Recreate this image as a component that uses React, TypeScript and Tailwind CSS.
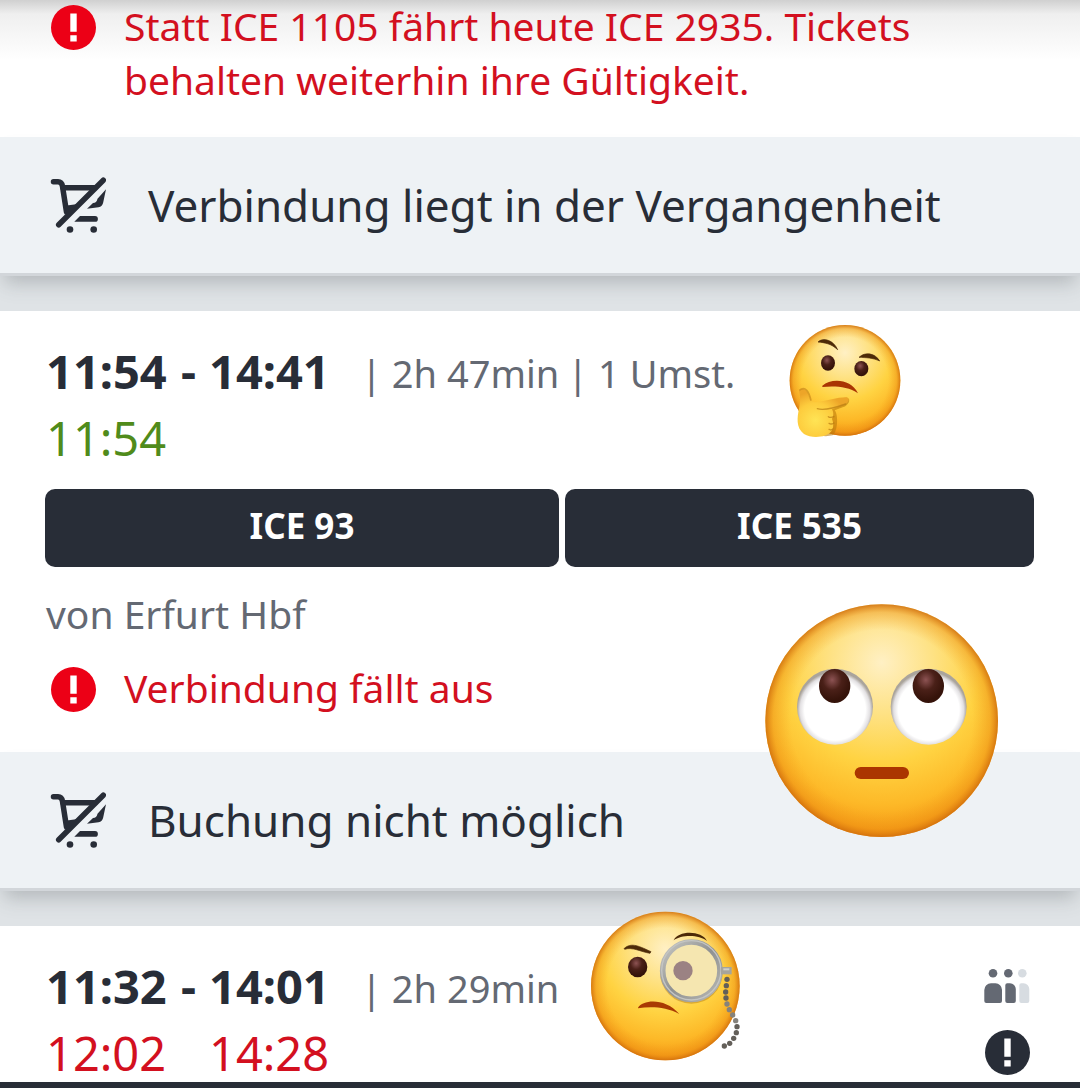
import type { ReactNode } from "react";

interface Connection {
  departure: string;
  arrival: string;
  liveDeparture: string;
  liveArrival?: string;
  liveClass: string;
  details: string[];
}

const cancelled: Connection = {
  departure: "11:54",
  arrival: "14:41",
  liveDeparture: "11:54",
  liveClass: "text-[#508b1b]",
  details: ["2h 47min", "1 Umst."],
};

const delayed: Connection = {
  departure: "11:32",
  arrival: "14:01",
  liveDeparture: "12:02",
  liveArrival: "14:28",
  liveClass: "text-[#d3101f]",
  details: ["2h 29min"],
};

function AlertIcon({ className }: { className: string }) {
  return (
    <svg viewBox="0 0 45 45" className={`size-[45px] shrink-0 ${className}`} aria-hidden="true">
      <circle cx="22.5" cy="22.5" r="22.5" fill="currentColor" />
      <path d="M19.300 8.500h6.400v18.200h-6.400zM19.300 30.300h6.400v6.200h-6.400z" fill="#fff" />
    </svg>
  );
}

function NoCartIcon() {
  return (
    <svg viewBox="0 0 56 56" className="size-14 shrink-0" aria-hidden="true">
      <g fill="none" stroke="currentColor" strokeWidth="5.5" strokeLinecap="round" strokeLinejoin="round">
        <path d="M3.500 4.800H8c3 0 4 1.700 4.500 4.500L16.500 35" />
        <path d="M13 10.800H45" />
        <path d="M53.300 3.200 8.700 47.800" />
      </g>
      <g fill="currentColor">
        <path d="M15 28.700 28 27 17 38z" />
        <path d="M56 12.300 53.200 25.500c-.6 2.800-2 4.300-4.700 4.700L37 31.800l6-5.800c2.500-.2 3.800-1.200 4.500-4.200z" />
        <path d="M24.300 44.800 30 39H45a2.900 2.900 0 0 1 0 5.800z" />
        <circle cx="20" cy="52.500" r="3.300" />
        <circle cx="43.700" cy="52.500" r="3.300" />
      </g>
    </svg>
  );
}

function OccupancyIcon() {
  return (
    <svg viewBox="0 0 46 36" className="h-9 w-[46px]" role="img" aria-label="Auslastung">
      <g fill="#646973">
        <circle cx="9" cy="5.300" r="4.300" />
        <path d="M7 15.300h4.500a6.500 6.500 0 0 1 6.500 6.500V33a2 2 0 0 1-2 2H2.300a2 2 0 0 1-2-2V22a6.700 6.700 0 0 1 6.700-6.700z" />
        <circle cx="24.300" cy="5.300" r="4.300" />
        <path d="M23.300 15.300H26a5.800 5.800 0 0 1 5.800 5.800V33a2 2 0 0 1-2 2h-6.500a2 2 0 0 1-2-2V17.300a2 2 0 0 1 2-2z" />
      </g>
      <g fill="#d7dce1">
        <circle cx="38.300" cy="5.300" r="4.300" />
        <path d="M37.300 15.300h2.200a5.800 5.800 0 0 1 5.800 5.800V33a2 2 0 0 1-2 2h-6a2 2 0 0 1-2-2V17.300a2 2 0 0 1 2-2z" />
      </g>
    </svg>
  );
}

// Gradients shared by all emoji faces
function EmojiDefs() {
  return (
    <svg className="absolute size-0" aria-hidden="true">
      <defs>
        <radialGradient id="skin" cx="0.5" cy="0.25" r="0.78">
          <stop offset="0" stopColor="#fff0c4" />
          <stop offset="0.28" stopColor="#fee285" />
          <stop offset="0.55" stopColor="#ffd342" />
          <stop offset="0.78" stopColor="#fdb928" />
          <stop offset="1" stopColor="#f4910f" />
        </radialGradient>
        <radialGradient id="rim">
          <stop offset="0.78" stopColor="#f09a1a" stopOpacity="0" />
          <stop offset="0.93" stopColor="#e98a12" stopOpacity="0.4" />
          <stop offset="1" stopColor="#cf6c0c" stopOpacity="0.85" />
        </radialGradient>
        <radialGradient id="pupil" cx="0.42" cy="0.32" r="0.6">
          <stop offset="0" stopColor="#8d5353" />
          <stop offset="0.5" stopColor="#4a2018" />
          <stop offset="1" stopColor="#35130a" />
        </radialGradient>
        <radialGradient id="eyeball" cy="0.54">
          <stop offset="0.8" stopColor="#fff" />
          <stop offset="0.92" stopColor="#e2e0e2" />
          <stop offset="1" stopColor="#aaa49c" />
        </radialGradient>
        <radialGradient id="hand" cx="0.35" cy="0.65" r="0.6">
          <stop offset="0" stopColor="#ffe455" />
          <stop offset="0.6" stopColor="#fdcc3d" />
          <stop offset="1" stopColor="#eda528" />
        </radialGradient>
        <linearGradient id="metal" x1="0" y1="0" x2="1" y2="1">
          <stop offset="0" stopColor="#c9c9c4" />
          <stop offset="0.5" stopColor="#8f9192" />
          <stop offset="1" stopColor="#b9b9b4" />
        </linearGradient>
      </defs>
    </svg>
  );
}

function Face({ cx, cy, r }: { cx: number; cy: number; r: number }) {
  return (
    <>
      <circle cx={cx} cy={cy} r={r} fill="url(#skin)" />
      <circle cx={cx} cy={cy} r={r} fill="url(#rim)" />
    </>
  );
}

function ThinkingEmoji() {
  return (
    <svg viewBox="0 0 390 390" className="absolute top-1 left-[780px] size-[130px]" role="img" aria-label="Nachdenkliches Gesicht">
      <Face cx={195} cy={196} r={166} />
      <path d="M114 81C130 66 160 75 173 104C154 86 134 83 114 81z" fill="#4d2a08" stroke="#4d2a08" strokeWidth="2" />
      <path d="M237 127C256 109 286 115 299 138C278 128 258 128 237 127z" fill="#4d2a08" stroke="#4d2a08" strokeWidth="2" />
      <ellipse cx="144" cy="144" rx="21" ry="23" fill="url(#pupil)" />
      <ellipse cx="244" cy="161" rx="21" ry="23" fill="url(#pupil)" />
      <path d="M127 212C155 188 214 192 234 235C204 213 160 213 127 216z" fill="#a93503" />
      <path d="M92 262C120 272 175 246 203 248C214 254 204 272 190 276L164 286C176 300 173 352 158 361C130 368 100 360 82 340z" fill="#bd7c0c" opacity="0.6" />
      <path
        d="M57 227C66 217 80 222 87 243C92 257 98 262 112 261C140 258 175 246 200 247C212 252 204 265 190 270L156 283C163 296 159 306 156 312C162 326 160 342 154 349C140 368 95 372 72 357C46 338 53 304 56 286C62 263 61 244 57 227z"
        fill="url(#hand)"
      />
      <path d="M112 281C132 288 166 278 197 267M145 305C149 308 155 308 162 305M147 325C151 328 156 328 162 324M147 343C151 346 154 346 159 342" fill="none" stroke="#b77b12" strokeWidth="4" strokeLinecap="round" opacity="0.7" />
      <path d="M58 226C76 212 87 230 93 257" fill="none" stroke="#c98a1b" strokeWidth="5" opacity="0.7" />
    </svg>
  );
}

function RollingEyesEmoji() {
  return (
    <svg viewBox="0 0 765 765" className="absolute top-[284px] left-[755px] size-[255px]" role="img" aria-label="Augenrollendes Gesicht">
      <Face cx={380} cy={377} r={349} />
      <circle cx="240" cy="335" r="114" fill="url(#eyeball)" />
      <circle cx="521" cy="335" r="114" fill="url(#eyeball)" />
      <ellipse cx="239" cy="273" rx="47" ry="51" fill="url(#pupil)" />
      <ellipse cx="520" cy="273" rx="47" ry="51" fill="url(#pupil)" />
      <rect x="299" y="516" width="163" height="36" rx="18" fill="#ab3500" />
    </svg>
  );
}

const chain = [
  [441, 238], [439, 257], [437, 276], [438, 294], [441, 312], [448, 329], [458, 345],
  [467, 362], [471, 380], [469, 398], [461, 415], [449, 430], [433, 438],
];

function MonocleEmoji() {
  return (
    <svg viewBox="0 0 510 510" className="absolute -top-[26px] left-[580px] size-[170px]" role="img" aria-label="Gesicht mit Monokel">
      <Face cx={256} cy={258} r={223} />
      <path d="M132 146C154 125 180 140 213 155L210 160C181 155 157 140 134 148z" fill="#4d2a08" stroke="#4d2a08" strokeWidth="2" />
      <path d="M281 121C294 91 365 90 381 123C357 103 304 104 281 121z" fill="#4d2a08" />
      <ellipse cx="173" cy="201" rx="29" ry="31" fill="url(#pupil)" />
      <path d="M174 323C190 298 256 293 298 342C258 320 211 319 174 325z" fill="#a93a03" />
      <circle cx="334" cy="217" r="86" fill="none" stroke="#a86c10" strokeWidth="16" opacity="0.4" />
      <circle cx="334" cy="212" r="84" fill="#f5e6b0" />
      <circle cx="309" cy="212" r="29" fill="#9b8283" />
      <circle cx="334" cy="212" r="86" fill="none" stroke="url(#metal)" strokeWidth="17" />
      <circle cx="334" cy="211" r="89" fill="none" stroke="#c4c5c3" strokeWidth="4" />
      <path d="M423 201h32v22h-32z" fill="#a6a49d" />
      <path d="M430 205h18v6h-18z" fill="#d0cfca" />
      {chain.map(([x, y], i) => (
        <circle key={y} cx={x} cy={y} r="8" fill={i > 3 && i < 8 ? "#85827c" : "#635f59"} />
      ))}
    </svg>
  );
}

function Alert({ children }: { children: ReactNode }) {
  return (
    <div className="flex items-start gap-7 pr-8 pl-[51px]">
      <AlertIcon className="mt-1.5 text-[#ec0016]" />
      <p className="text-[39px] leading-[54px] text-[#d3101f]">{children}</p>
    </div>
  );
}

function BookingNotice({ children }: { children: ReactNode }) {
  return (
    <div className="flex h-[136px] items-center gap-[42px] bg-[#eef2f5] px-[50px] shadow-[0_3px_0_0_#d2d6da,0_14px_18px_-4px_rgba(80,85,90,0.3)]">
      <NoCartIcon />
      <p className="text-[44px] leading-[60px]">{children}</p>
    </div>
  );
}

function ConnectionTimes({ connection }: { connection: Connection }) {
  return (
    <div className="flex items-start gap-[30px] pl-[46px] leading-[56px]">
      <div className="grid grid-cols-[122px_41px_122px] gap-y-[11px] text-[47px]">
        <time className="font-bold">{connection.departure}</time>
        <span className="text-center font-bold">-</span>
        <time className="font-bold">{connection.arrival}</time>
        <time className={connection.liveClass}>{connection.liveDeparture}</time>
        <span />
        {connection.liveArrival && <time className={connection.liveClass}>{connection.liveArrival}</time>}
      </div>
      <p className="flex gap-2 pt-0.5 text-[38px] text-[#646973]">
        {connection.details.map((detail) => (
          <span key={detail}>| {detail}</span>
        ))}
      </p>
    </div>
  );
}

function TrainButton({ children }: { children: ReactNode }) {
  return (
    <button type="button" className="h-[78px] rounded-[10px] bg-[#282d37] pb-1 text-[35px] font-bold text-white">
      {children}
    </button>
  );
}

export default function App() {
  return (
    <div className="flex h-screen flex-col bg-[#282d37] font-['Noto_Sans','Open_Sans',sans-serif] text-[#282d37]">
      <EmojiDefs />
      <main className="flex flex-1 flex-col gap-[38px] overflow-hidden bg-[#dfe3e6]">
        <section className="bg-white bg-linear-to-b from-[#d0d0d0] via-[#efefef] via-[14px] to-white to-[60px]">
          <div className="-mt-px pb-[30px]">
            <Alert>Statt ICE 1105 fährt heute ICE 2935. Tickets behalten weiterhin ihre Gültigkeit.</Alert>
          </div>
          <BookingNotice>Verbindung liegt in der Vergangenheit</BookingNotice>
        </section>

        <section className="relative bg-white pt-8">
          <ConnectionTimes connection={cancelled} />
          <div className="mt-[23px] grid grid-cols-[514fr_469fr] gap-1.5 pr-[46px] pl-[45px]">
            <TrainButton>ICE 93</TrainButton>
            <TrainButton>ICE 535</TrainButton>
          </div>
          <p className="mt-5 pl-[46px] text-[39px] leading-[54px] text-[#646973]">von Erfurt Hbf</p>
          <div className="mt-5 pb-[37px]">
            <Alert>Verbindung fällt aus</Alert>
          </div>
          <BookingNotice>Buchung nicht möglich</BookingNotice>
          <ThinkingEmoji />
          <RollingEyesEmoji />
        </section>

        <section className="relative flex grow items-start justify-between bg-white pt-8 pr-[50px]">
          <ConnectionTimes connection={delayed} />
          <div className="flex flex-col items-end gap-[26px] pt-2.5">
            <OccupancyIcon />
            <AlertIcon className="text-[#282d37]" />
          </div>
          <MonocleEmoji />
        </section>
      </main>
      <footer className="h-1.5 shrink-0 bg-[#282d37]" />
    </div>
  );
}
